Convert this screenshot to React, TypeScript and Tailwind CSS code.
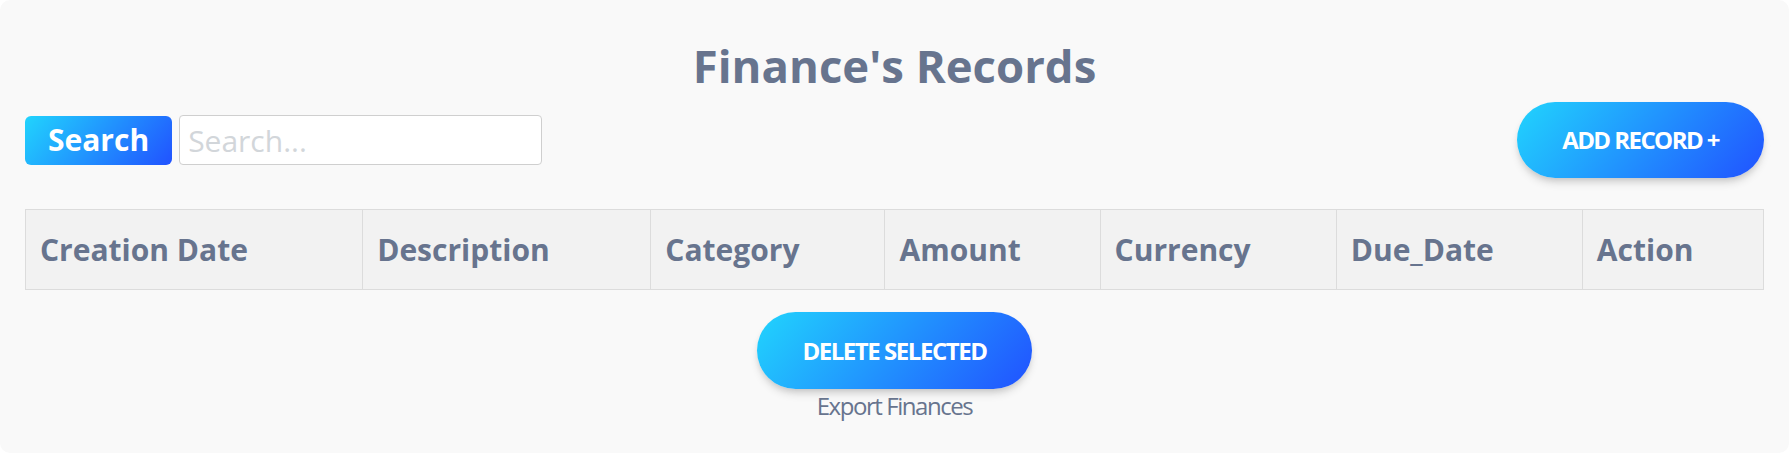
import React from "react";

const columns = [
  { label: "Creation Date", width: "w-[337px]" },
  { label: "Description", width: "w-[288px]" },
  { label: "Category", width: "w-[234px]" },
  { label: "Amount", width: "w-[215px]" },
  { label: "Currency", width: "w-[236px]" },
  { label: "Due_Date", width: "w-[246px]" },
  { label: "Action", width: "w-[181px]" },
];

export default function App() {
  return (
    <div className="min-h-screen w-full bg-white font-['Open_Sans',sans-serif] text-[#67748e]">
      <div className="flex h-[453px] w-full flex-col rounded-[10px] bg-[#f9f9f9] px-[25px] pt-[34px]">
        <h1 className="text-center text-[45.5px] font-bold leading-[62px]">Finance's Records</h1>

        <div className="mt-[6px] flex h-[76px] items-center justify-between">
          <div className="flex items-center gap-[7px]">
            <button className="h-[49px] rounded-[6px] bg-[linear-gradient(310deg,#2152ff,#21d4fd)] px-[23px] text-[30px] font-bold leading-none text-white">
              Search
            </button>
            <input
              placeholder="Search..."
              className="h-[50px] w-[363px] rounded-[4px] border border-[#cfcfcf] bg-white px-[8px] text-[30px] text-[#495057] outline-none placeholder:text-[#d2d6da]"
            />
          </div>
          <button className="h-[76px] rounded-full bg-[linear-gradient(310deg,#2152ff,#21d4fd)] px-[45px] text-[24px] font-bold uppercase leading-none tracking-[-0.065em] text-white shadow-[0_6px_10px_-2px_rgba(0,0,0,0.16),0_3px_6px_-2px_rgba(0,0,0,0.1)]">
            Add Record +
          </button>
        </div>

        <table className="mt-[31px] w-full table-fixed border-collapse">
          <thead>
            <tr className="h-[80px] bg-[#f2f2f2]">
              {columns.map((c) => (
                <th
                  key={c.label}
                  className={`${c.width} border border-[#dcdcdc] px-[14px] text-left text-[30px] font-bold`}
                >
                  {c.label}
                </th>
              ))}
            </tr>
          </thead>
        </table>

        <div className="mt-[22px] flex flex-col items-center">
          <button className="h-[77px] rounded-full bg-[linear-gradient(310deg,#2152ff,#21d4fd)] px-[45px] text-[24px] font-bold uppercase leading-none tracking-[-0.06em] text-white shadow-[0_6px_10px_-2px_rgba(0,0,0,0.16),0_3px_6px_-2px_rgba(0,0,0,0.1)]">
            Delete Selected
          </button>
          <span className="mt-[1px] text-[24px] leading-[32px] tracking-[-0.06em]">Export Finances</span>
        </div>
      </div>
    </div>
  );
}
